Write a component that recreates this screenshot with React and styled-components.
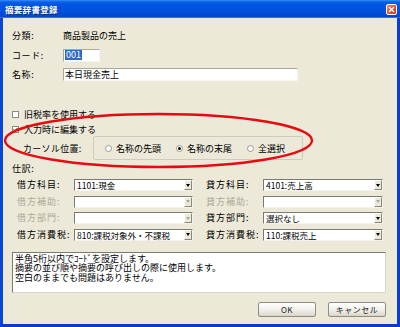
import React from 'react';
import styled, { createGlobalStyle } from 'styled-components';

const GlobalStyle = createGlobalStyle`
  html, body { margin: 0; padding: 0; background: #ece9d8; }
  body { font-family: "Noto Sans CJK JP", "DejaVu Sans", sans-serif; }
`;

const Window = styled.div`
  position: relative;
  width: 400px;
  height: 327px;
  display: flex;
  flex-direction: column;
  background: #ece9d8;
  overflow: hidden;
`;

const TitleBar = styled.div`
  height: 18px;
  flex: none;
  display: flex;
  align-items: center;
  justify-content: space-between;
  padding: 0 3px 0 5px;
  background: linear-gradient(to bottom, #3a8cf6 0%, #0a5fe6 12%, #0054e3 30%, #0050dd 70%, #0046c8 100%);
  border-bottom: 1px solid #3a6fd4;
  box-sizing: border-box;
`;

const Title = styled.span`
  color: #fff;
  font-size: 8.5px;
  font-weight: bold;
  letter-spacing: 0.3px;
  text-shadow: 1px 1px 0 #0a2a7a;
`;

const CloseButton = styled.div`
  width: 11px;
  height: 11px;
  margin-top: 1px;
  box-sizing: border-box;
  border: 1px solid #fff;
  border-radius: 2px;
  background: linear-gradient(135deg, #f08a6e 0%, #e0552e 50%, #c23c1c 100%);
  display: flex;
  align-items: center;
  justify-content: center;
`;

const Body = styled.div`
  flex: 1;
  display: flex;
  flex-direction: column;
  border-left: 3px solid #0a45d6;
  border-right: 3px solid #0a3fce;
  border-bottom: 3px solid #0a3bc0;
  padding-left: 9px;
  font-size: 9px;
  color: #000;
`;

const InfoList = styled.div`
  display: flex;
  flex-direction: column;
  gap: 6.5px;
  margin-top: 11px;
`;

const InfoRow = styled.div`
  display: flex;
  align-items: center;
  height: 13px;
`;

const InfoLabel = styled.span`
  width: 51px;
  letter-spacing: 0.6px;
`;

const TextBox = styled.div`
  width: ${p => p.$w}px;
  height: 13px;
  box-sizing: border-box;
  display: flex;
  align-items: center;
  padding-left: 1px;
  background: #fff;
  border-top: 1px solid #aca899;
  border-left: 1px solid #aca899;
  border-right: 1px solid #f6f5ef;
  border-bottom: 1px solid #f6f5ef;
`;

const Selected = styled.span`
  background: #316ac5;
  color: #fff;
  padding: 0 1px;
  line-height: 10px;
`;

const CheckList = styled.div`
  display: flex;
  flex-direction: column;
  gap: 3px;
  margin-top: 27px;
`;

const CheckRow = styled.label`
  display: flex;
  align-items: center;
  height: 12px;
  gap: 5px;
`;

const CheckBox = styled.span`
  width: 7px;
  height: 7px;
  box-sizing: border-box;
  border: 1px solid #8a8a80;
  background: #fff;
  display: flex;
  align-items: center;
  justify-content: center;
`;

const GroupRow = styled.div`
  display: flex;
  align-items: center;
  margin-top: 1px;
  padding-left: 11px;
`;

const GroupLabel = styled.span`
  width: 70px;
  letter-spacing: 0.3px;
`;

const GroupBox = styled.div`
  width: 210px;
  height: 24px;
  box-sizing: border-box;
  border: 1px solid #cfccbd;
  border-radius: 2px;
  display: flex;
  align-items: center;
  gap: 15px;
  padding-left: 11px;
`;

const RadioItem = styled.label`
  display: flex;
  align-items: center;
  gap: 4px;
`;

const Radio = styled.span`
  width: 7px;
  height: 7px;
  box-sizing: border-box;
  border-radius: 50%;
  border: 1px solid #9a9a90;
  background: #fff;
  display: flex;
  align-items: center;
  justify-content: center;
  &::after {
    content: '';
    width: 3px;
    height: 3px;
    border-radius: 50%;
    background: ${p => (p.$on ? '#111' : 'transparent')};
  }
`;

const SectionLabel = styled.div`
  height: 12px;
  line-height: 12px;
  margin-top: 3px;
  letter-spacing: 0.6px;
`;

const Journal = styled.div`
  display: flex;
  gap: 13px;
  margin-top: 4px;
  margin-left: 5px;
`;

const JournalSide = styled.div`
  display: grid;
  grid-template-columns: 57px ${p => p.$combo}px;
  row-gap: 4.67px;
`;

const FieldLabel = styled.span`
  height: 12px;
  line-height: 12px;
  white-space: nowrap;
  letter-spacing: 1px;
  color: ${p => (p.$disabled ? '#aca899' : '#000')};
`;

const Combo = styled.div`
  height: 12px;
  box-sizing: border-box;
  display: flex;
  background: #fff;
  border-top: 1px solid #7a7a72;
  border-left: 1px solid #7a7a72;
  border-right: 1px solid #f4f3ee;
  border-bottom: 1px solid #f4f3ee;
`;

const ComboText = styled.span`
  flex: 1;
  min-width: 0;
  padding-left: 2px;
  font-size: 8.5px;
  line-height: 10px;
  white-space: nowrap;
`;

const DropButton = styled.span`
  width: 8px;
  flex: none;
  box-sizing: border-box;
  background: #ece9d8;
  border-top: 1px solid #fff;
  border-left: 1px solid #fff;
  border-right: 1px solid #8a887d;
  border-bottom: 1px solid #8a887d;
  display: flex;
  align-items: center;
  justify-content: center;
  &::after {
    content: '';
    border-left: 2.5px solid transparent;
    border-right: 2.5px solid transparent;
    border-top: 3px solid ${p => (p.$disabled ? '#aca899' : '#000')};
  }
`;

const Memo = styled.div`
  width: 374px;
  height: 41px;
  box-sizing: border-box;
  margin-top: 11px;
  background: #fff;
  border: 1px solid #7a7a72;
  border-right-color: #d8d6cb;
  border-bottom-color: #d8d6cb;
  padding: 1px 2px;
  font-size: 9px;
  line-height: 9.5px;
`;

const ButtonRow = styled.div`
  display: flex;
  justify-content: flex-end;
  gap: 12px;
  margin-top: 9px;
  padding-right: 11px;
`;

const Button = styled.button`
  width: 58px;
  height: 15px;
  padding: 0;
  box-sizing: border-box;
  border: 1px solid #8f8d84;
  border-radius: 2px;
  background: linear-gradient(to bottom, #ffffff 0%, #f3f2ee 45%, #e3e0d6 85%, #d4d0c4 100%);
  font-family: "Noto Sans CJK JP", "DejaVu Sans", sans-serif;
  font-size: 8px;
  color: #222;
  letter-spacing: 0.5px;
`;

const Annotation = styled.svg`
  position: absolute;
  left: 0;
  top: 0;
  pointer-events: none;
`;

const infoRows = [
  { label: '分類:', value: <span>商品製品の売上</span> },
  { label: 'コード:', value: <TextBox $w={37}><Selected>001</Selected></TextBox> },
  { label: '名称:', value: <TextBox $w={235}>本日現金売上</TextBox> },
];

const debit = [
  ['借方科目:', '1101:現金', false],
  ['借方補助:', '', true],
  ['借方部門:', '', true],
  ['借方消費税:', '810:課税対象外・不課税', false],
];

const credit = [
  ['貸方科目:', '4101:売上高', false],
  ['貸方補助:', '', true],
  ['貸方部門:', '選択なし', false],
  ['貸方消費税:', '110:課税売上', false],
];

function ComboBox({ value, disabled }) {
  return (
    <Combo>
      <ComboText>{value}</ComboText>
      <DropButton $disabled={disabled} />
    </Combo>
  );
}

function Side({ rows, combo }) {
  return (
    <JournalSide $combo={combo}>
      {rows.map(([label, value, disabled]) => (
        <React.Fragment key={label}>
          <FieldLabel $disabled={disabled}>{label}</FieldLabel>
          <ComboBox value={value} disabled={disabled} />
        </React.Fragment>
      ))}
    </JournalSide>
  );
}

export default function App() {
  return (
    <Window>
      <GlobalStyle />
      <TitleBar>
        <Title>摘要辞書登録</Title>
        <CloseButton>
          <svg width="7" height="7" viewBox="0 0 7 7">
            <path d="M1 1L6 6M6 1L1 6" stroke="#fff" strokeWidth="1.4" />
          </svg>
        </CloseButton>
      </TitleBar>
      <Body>
        <InfoList>
          {infoRows.map(r => (
            <InfoRow key={r.label}>
              <InfoLabel>{r.label}</InfoLabel>
              {r.value}
            </InfoRow>
          ))}
        </InfoList>
        <CheckList>
          <CheckRow>
            <CheckBox />
            旧税率を使用する
          </CheckRow>
          <CheckRow>
            <CheckBox>
              <svg width="5" height="5" viewBox="0 0 5 5">
                <path d="M0.5 2.3L2 3.8L4.5 1" stroke="#222" strokeWidth="1" fill="none" />
              </svg>
            </CheckBox>
            入力時に編集する
          </CheckRow>
        </CheckList>
        <GroupRow>
          <GroupLabel>カーソル位置:</GroupLabel>
          <GroupBox>
            <RadioItem><Radio />名称の先頭</RadioItem>
            <RadioItem><Radio $on />名称の末尾</RadioItem>
            <RadioItem><Radio />全選択</RadioItem>
          </GroupBox>
        </GroupRow>
        <SectionLabel>仕訳:</SectionLabel>
        <Journal>
          <Side rows={debit} combo={119} />
          <Side rows={credit} combo={120} />
        </Journal>
        <Memo>
          半角5桁以内でｺｰﾄﾞを設定します。<br />
          摘要の並び順や摘要の呼び出しの際に使用します。<br />
          空白のままでも問題はありません。
        </Memo>
        <ButtonRow>
          <Button>OK</Button>
          <Button>キャンセル</Button>
        </ButtonRow>
      </Body>
      <Annotation width="400" height="327" viewBox="0 0 400 327">
        <ellipse cx="158.5" cy="140.5" rx="153.5" ry="26.5" fill="none" stroke="#e80a10" strokeWidth="2.4" />
      </Annotation>
    </Window>
  );
}
